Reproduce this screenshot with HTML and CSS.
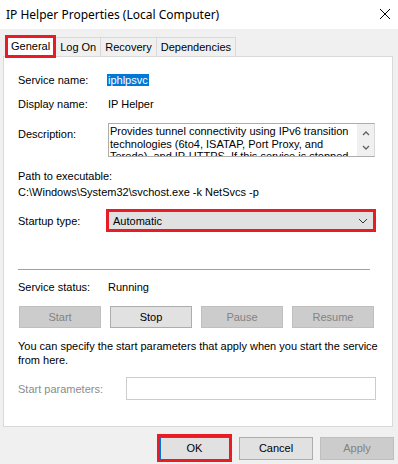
FILE: index.html
```html
<!DOCTYPE html>
<html lang="en">
<head>
<meta charset="UTF-8">
<title>IP Helper Properties (Local Computer)</title>
<link rel="stylesheet" href="styles.css">
</head>
<body>
<div class="window">
    <div class="titlebar">
        <span class="title">IP Helper Properties (Local Computer)</span>
        <svg class="close" width="12" height="12" viewBox="0 0 12 12"><path d="M1 1L11 11M11 1L1 11" stroke="#000" stroke-width="1"/></svg>
    </div>

    <div class="tabs">
        <div class="tab selected">General</div>
        <div class="tab">Log On</div>
        <div class="tab">Recovery</div>
        <div class="tab">Dependencies</div>
    </div>

    <div class="panel">
        <div class="row first">
            <span class="label">Service name:</span>
            <span><span class="highlight">iphlpsvc</span></span>
        </div>
        <div class="row display">
            <span class="label">Display name:</span>
            <span>IP Helper</span>
        </div>
        <div class="row desc">
            <span class="label desc-label">Description:</span>
            <div class="textbox">
                <div class="textbox-text">Provides tunnel connectivity using IPv6 transition technologies (6to4, ISATAP, Port Proxy, and Teredo), and IP-HTTPS. If this service is stopped, the computer will not have the enhanced connectivity benefits that these technologies offer.</div>
                <div class="scroll">
                    <svg width="8" height="5" viewBox="0 0 8 5"><path d="M1 4L4 1L7 4" fill="none" stroke="#606060" stroke-width="1.3"/></svg>
                    <svg width="8" height="5" viewBox="0 0 8 5"><path d="M1 1L4 4L7 1" fill="none" stroke="#606060" stroke-width="1.3"/></svg>
                </div>
            </div>
        </div>
        <div class="path-label">Path to executable:</div>
        <div class="path">C:\Windows\System32\svchost.exe -k NetSvcs -p</div>
        <div class="row startup">
            <span class="label">Startup type:</span>
            <div class="combo">
                <span>Automatic</span>
                <svg width="10" height="6" viewBox="0 0 10 6"><path d="M1 1L5 5L9 1" fill="none" stroke="#333" stroke-width="1"/></svg>
            </div>
        </div>
        <div class="separator"></div>
        <div class="row status">
            <span class="label">Service status:</span>
            <span>Running</span>
        </div>
        <div class="actions">
            <button class="btn disabled">Start</button>
            <button class="btn">Stop</button>
            <button class="btn disabled">Pause</button>
            <button class="btn disabled">Resume</button>
        </div>
        <p class="hint">You can specify the start parameters that apply when you start the service from here.</p>
        <div class="row params">
            <span class="label grey">Start parameters:</span>
            <div class="input"></div>
        </div>
    </div>

    <div class="footer">
        <button class="btn ok">OK</button>
        <button class="btn wide">Cancel</button>
        <button class="btn wide disabled">Apply</button>
    </div>
</div>
</body>
</html>
```

FILE: styles.css
```css
body {
    margin: 0;
    font-family: "Liberation Sans", Arial, sans-serif;
    font-size: 11px;
    color: #000;
}

.window {
    width: 398px;
    height: 464px;
    background-color: #f0f0f0;
    overflow: hidden;
}

.titlebar {
    height: 29px;
    background-color: #fff;
    display: flex;
    align-items: center;
    justify-content: space-between;
    padding: 0 7px 0 6px;
}

.title {
    font-family: "Noto Sans", sans-serif;
    font-size: 12px;
}

.close {
    margin-top: -2px;
}

.tabs {
    display: flex;
    align-items: flex-end;
    height: 21px;
    margin: 6px 0 0 5px;
}

.tab {
    box-sizing: border-box;
    height: 19px;
    line-height: 18px;
    padding: 0 4px;
    border: 1px solid #d9d9d9;
    border-bottom: none;
    margin-left: -1px;
}

.tab.selected {
    position: relative;
    z-index: 1;
    height: 23px;
    margin: 0 0 -2px 0;
    padding: 0 3px;
    line-height: 17px;
    background-color: #fff;
    border: 3px solid #e81c24;
}

.panel {
    box-sizing: border-box;
    height: 371px;
    margin: 0 5px 0 3px;
    padding: 0 14px;
    background-color: #fff;
    border: 1px solid #d9d9d9;
}

.row {
    display: grid;
    grid-template-columns: 90px 1fr;
    align-items: center;
    line-height: 14px;
}

.first {
    margin-top: 16px;
}

.highlight {
    background-color: #0078d7;
    color: #fff;
    padding: 0 1px;
    margin-left: -1px;
}

.display {
    margin-top: 10px;
}

.desc {
    margin-top: 12px;
    align-items: start;
}

.desc-label {
    padding-top: 4px;
}

.textbox {
    box-sizing: border-box;
    width: 267px;
    height: 34px;
    border: 1px solid #adadad;
    border-right-color: #d9d9d9;
    display: flex;
    overflow: hidden;
}

.textbox-text {
    flex: 1;
    padding: 1px 2px 0 1px;
    line-height: 12.5px;
}

.scroll {
    width: 17px;
    background-color: #f0f0f0;
    display: flex;
    flex-direction: column;
    align-items: center;
    justify-content: space-between;
    padding: 7px 0 6px;
}

.path-label {
    margin-top: 11px;
    line-height: 16px;
}

.path {
    line-height: 16px;
}

.startup {
    margin-top: 9px;
}

.combo {
    box-sizing: border-box;
    width: 270px;
    height: 23px;
    margin-left: -2px;
    border: 3px solid #e81c24;
    background-color: #e1e1e1;
    display: flex;
    align-items: center;
    justify-content: space-between;
    padding: 0 5px 0 4px;
}

.separator {
    height: 1px;
    width: 352px;
    background-color: #a0a0a0;
    margin-top: 37px;
}

.status {
    margin-top: 10px;
}

.actions {
    display: flex;
    gap: 9px;
    margin-top: 12px;
    margin-left: 1px;
}

.btn {
    box-sizing: border-box;
    width: 82px;
    height: 22px;
    font-family: "Liberation Sans", Arial, sans-serif;
    font-size: 11px;
    color: #000;
    background-color: #e1e1e1;
    border: 1px solid #adadad;
    padding: 0;
    margin: 0;
}

.btn.disabled {
    color: #838383;
    background-color: #cccccc;
    border-color: #bfbfbf;
}

.hint {
    margin: 11px 0 0;
    line-height: 14px;
}

.params {
    margin-top: 10px;
    grid-template-columns: 108px 1fr;
}

.grey {
    color: #8c8c8c;
}

.input {
    box-sizing: border-box;
    width: 250px;
    height: 23px;
    border: 1px solid #cccccc;
}

.footer {
    display: flex;
    justify-content: flex-end;
    align-items: center;
    gap: 7px;
    padding: 7px 4px 0 0;
}

.btn.wide {
    width: 74px;
    height: 23px;
}

.btn.ok {
    width: 75px;
    height: 28px;
    border: 3px solid #e81c24;
    box-shadow: inset 1px 1px 0 #0078d7;
}
```
